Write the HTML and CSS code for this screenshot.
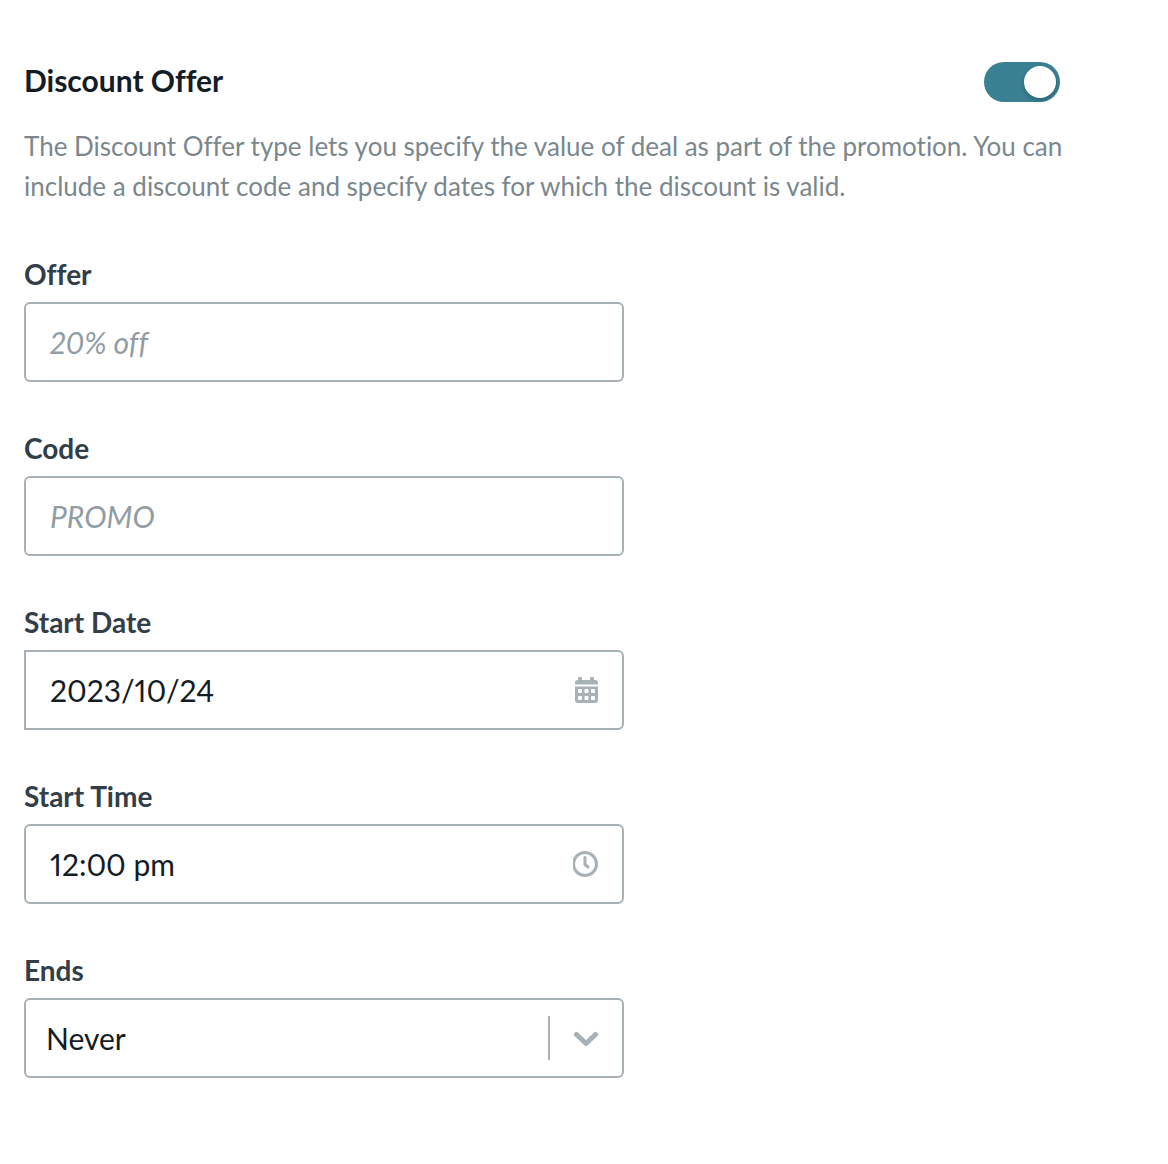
FILE: index.html
```html
<!DOCTYPE html>
<html lang="en">
<head>
<meta charset="utf-8">
<meta name="viewport" content="width=device-width, initial-scale=1">
<title>Discount Offer</title>
<link rel="stylesheet" href="styles.css">
</head>
<body>
<main class="panel">
  <header class="panel-header">
    <h1 class="title" id="offer-title">Discount Offer</h1>
    <input class="toggle" type="checkbox" role="switch" aria-labelledby="offer-title" checked>
  </header>
  <p class="description">The Discount Offer type lets you specify the value of deal as part of the promotion. You can include a discount code and specify dates for which the discount is valid.</p>
  <form class="form">
    <div class="field">
      <label class="label" for="offer">Offer</label>
      <div class="control"><input class="input" id="offer" type="text" placeholder="20% off"></div>
    </div>
    <div class="field">
      <label class="label" for="code">Code</label>
      <div class="control"><input class="input" id="code" type="text" placeholder="PROMO"></div>
    </div>
    <div class="field">
      <label class="label" for="start-date">Start Date</label>
      <div class="control control-date">
        <input class="input" id="start-date" type="text" value="2023/10/24">
        <svg class="icon" viewBox="0 0 26 28" aria-hidden="true">
          <path d="M6 1h2q1 0 1 1v2h8V2q0-1 1-1h2q1 0 1 1v2h1q3 0 3 3v1.500H2V7q0-3 3-3h0V2q0-1 1-1zM2 10.500h23V24q0 3-3 3H5q-3 0-3-3z"/>
          <g class="icon-holes">
            <rect x="5" y="13" width="4" height="4" rx="1"/>
            <rect x="11.500" y="13" width="4" height="4" rx="1"/>
            <rect x="18" y="13" width="4" height="4" rx="1"/>
            <rect x="5" y="20" width="4" height="4" rx="1"/>
            <rect x="11.500" y="20" width="4" height="4" rx="1"/>
            <rect x="18" y="20" width="4" height="4" rx="1"/>
          </g>
        </svg>
      </div>
    </div>
    <div class="field">
      <label class="label" for="start-time">Start Time</label>
      <div class="control">
        <input class="input" id="start-time" type="text" value="12:00 pm">
        <svg class="icon icon-line" viewBox="0 0 26 28" aria-hidden="true">
          <circle cx="12" cy="14" r="11.500"/>
          <path d="M12 7.500V14.500l3 2.500"/>
        </svg>
      </div>
    </div>
    <div class="field">
      <label class="label" for="ends">Ends</label>
      <div class="control">
        <select class="input select" id="ends"><option>Never</option></select>
        <span class="divider"></span>
        <svg class="icon icon-chevron" viewBox="0 0 26 28" aria-hidden="true">
          <path d="M3.500 10.500l9.500 9 9.500-9"/>
        </svg>
      </div>
    </div>
  </form>
</main>
</body>
</html>
```
FILE: styles.css
```css
*, *::before, *::after {
  box-sizing: border-box;
}

body {
  margin: 0;
  background: #fff;
  color: #141c26;
  font-family: Lato, "Liberation Sans", sans-serif;
  font-variant-ligatures: none;
  font-variant-numeric: proportional-nums;
}

.panel {
  padding: 62px 100px 88px 24px;
}

.panel-header {
  display: flex;
  align-items: flex-start;
  justify-content: space-between;
  padding-right: 8px;
}

.title {
  margin: 0;
  font-size: 30px;
  line-height: 36px;
  font-weight: 700;
}

.toggle {
  appearance: none;
  display: flex;
  justify-content: flex-end;
  width: 76px;
  height: 40px;
  margin: 0;
  padding: 4px;
  border-radius: 20px;
  background: #398092;
}

.toggle::before {
  content: "";
  width: 32px;
  height: 32px;
  border-radius: 50%;
  background: #fff;
  box-shadow: 0 2px 4px rgba(0, 0, 0, 0.25);
}

.toggle:not(:checked) {
  justify-content: flex-start;
  background: #a7b1b6;
}

.description {
  margin: 24px 0 52px;
  color: #7b878d;
  font-size: 26px;
  line-height: 40px;
}

.form {
  display: grid;
  gap: 50px;
  max-width: 600px;
}

.field {
  display: grid;
  gap: 12px;
}

.label {
  color: #323e49;
  font-size: 28px;
  line-height: 32px;
  font-weight: 700;
}

.control {
  display: flex;
  align-items: center;
  height: 80px;
  padding-right: 23px;
  border: 2px solid #a7b1b6;
  border-radius: 6px;
}

.control-date {
  border-top-left-radius: 0;
  border-bottom-left-radius: 0;
}

.input {
  flex: 1;
  min-width: 0;
  height: 76px;
  padding: 0 24px;
  border: 0;
  outline: 0;
  background: transparent;
  color: inherit;
  font: inherit;
  font-size: 30px;
}

.input::placeholder {
  color: #929ca3;
  font-style: italic;
  opacity: 1;
}

.select {
  appearance: none;
  padding: 0 20px;
}

.divider {
  width: 2px;
  height: 44px;
  margin-right: 23px;
  background: #a7b1b6;
}

.icon {
  flex: none;
  width: 26px;
  height: 28px;
  fill: #a7b1b6;
}

.icon-holes {
  fill: #fff;
}

.icon-line {
  fill: none;
  stroke: #a7b1b6;
  stroke-width: 3;
  stroke-linecap: round;
}

.icon-chevron {
  fill: none;
  stroke: #a7b1b6;
  stroke-width: 5;
  stroke-linecap: round;
  stroke-linejoin: round;
}
```
